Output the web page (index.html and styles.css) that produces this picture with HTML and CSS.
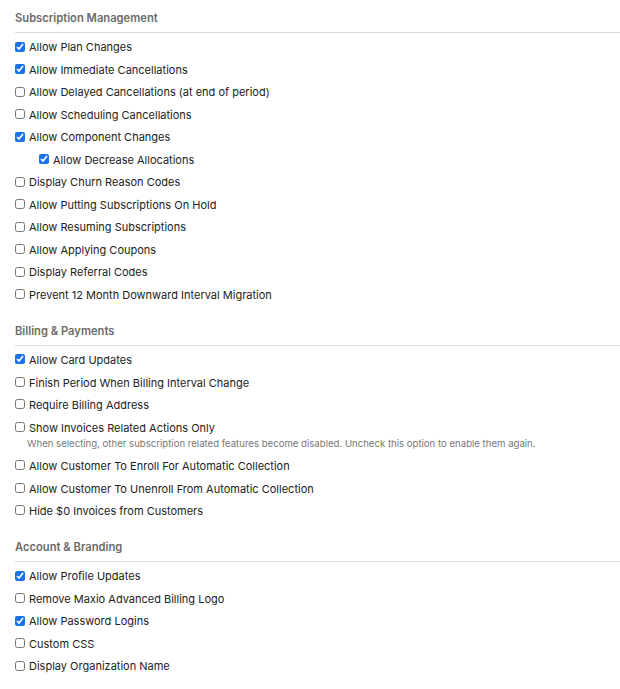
FILE: index.html
```html
<html lang="en">
  <head>
    <meta charset="UTF-8" />
    <meta name="viewport" content="width=device-width, initial-scale=1.0" />
    <title>Self-Service Page Settings</title>
    <link rel="stylesheet" href="styles.css">
  </head>
  <body>
    <div class="settings">
      <div class="section">
        <div class="section-title">Subscription Management</div>
        <div class="options">
          <label class="option"><input type="checkbox" checked /> Allow Plan Changes</label>
          <label class="option"><input type="checkbox" checked /> Allow Immediate Cancellations</label>
          <label class="option"><input type="checkbox" /> Allow Delayed Cancellations (at end of period)</label>
          <label class="option"><input type="checkbox" /> Allow Scheduling Cancellations</label>
          <label class="option"><input type="checkbox" checked /> Allow Component Changes</label>
          <label class="option nested"><input type="checkbox" checked /> Allow Decrease Allocations</label>
          <label class="option"><input type="checkbox" /> Display Churn Reason Codes</label>
          <label class="option"><input type="checkbox" /> Allow Putting Subscriptions On Hold</label>
          <label class="option"><input type="checkbox" /> Allow Resuming Subscriptions</label>
          <label class="option"><input type="checkbox" /> Allow Applying Coupons</label>
          <label class="option"><input type="checkbox" /> Display Referral Codes</label>
          <label class="option"><input type="checkbox" /> Prevent 12 Month Downward Interval Migration</label>
        </div>
      </div>

      <div class="section">
        <div class="section-title">Billing &amp; Payments</div>
        <div class="options">
          <label class="option"><input type="checkbox" checked /> Allow Card Updates</label>
          <label class="option"><input type="checkbox" /> Finish Period When Billing Interval Change</label>
          <label class="option"><input type="checkbox" /> Require Billing Address</label>
          <div class="option-group">
            <label class="option"><input type="checkbox" /> Show Invoices Related Actions Only</label>
            <div class="hint">When selecting, other subscription related features become disabled. Uncheck this option to enable them again.</div>
          </div>
          <label class="option"><input type="checkbox" /> Allow Customer To Enroll For Automatic Collection</label>
          <label class="option"><input type="checkbox" /> Allow Customer To Unenroll From Automatic Collection</label>
          <label class="option"><input type="checkbox" /> Hide $0 Invoices from Customers</label>
        </div>
      </div>

      <div class="section">
        <div class="section-title">Account &amp; Branding</div>
        <div class="options">
          <label class="option"><input type="checkbox" checked /> Allow Profile Updates</label>
          <label class="option"><input type="checkbox" /> Remove Maxio Advanced Billing Logo</label>
          <label class="option"><input type="checkbox" checked /> Allow Password Logins</label>
          <label class="option"><input type="checkbox" /> Custom CSS</label>
          <label class="option"><input type="checkbox" /> Display Organization Name</label>
        </div>
      </div>
    </div>
  </body>
</html>
```

FILE: styles.css
```css
body {
  margin: 0;
  background-color: white;
  font-family: Inter, "Liberation Sans", sans-serif;
  font-size: 11px;
  color: #222;
}

.settings {
  padding: 10px 0 0 15px;
}

.section {
  margin-bottom: 16.5px;
}

.section-title {
  font-size: 11.2px;
  font-weight: 600;
  color: #6b6b6b;
  line-height: 16px;
  padding-bottom: 6px;
  border-bottom: 1px solid #dcdcdc;
  margin-bottom: 3.25px;
}

.options {
  display: flex;
  flex-direction: column;
}

.option {
  display: flex;
  align-items: center;
  height: 22.5px;
  line-height: 22.5px;
}

.option.nested {
  padding-left: 24px;
}

.option input {
  width: 10px;
  height: 10px;
  margin: 0 4px 2px 0;
  accent-color: #1a73e8;
}

.hint {
  font-size: 9.6px;
  color: #777;
  padding-left: 12px;
  margin-top: -1.75px;
  margin-bottom: 3.75px;
  line-height: 14px;
}
```
